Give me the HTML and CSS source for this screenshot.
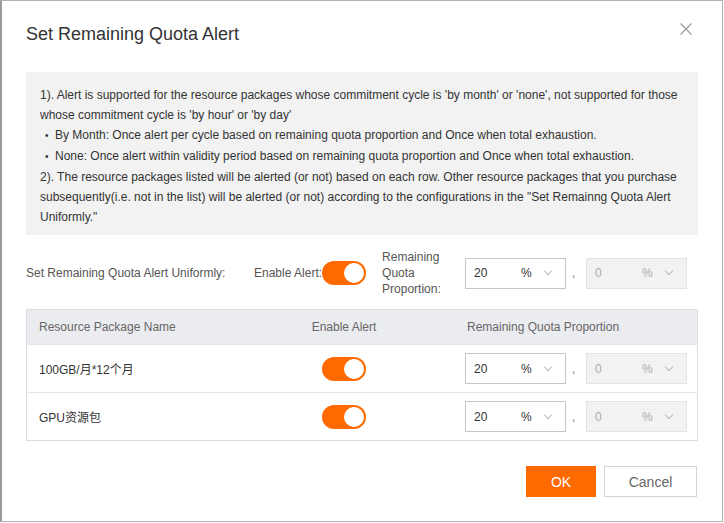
FILE: index.html
```html
<!DOCTYPE html>
<html lang="en">
<head>
    <meta charset="UTF-8">
    <meta name="viewport" content="width=device-width, initial-scale=1.0">
    <title>Set Remaining Quota Alert</title>
    <link rel="stylesheet" href="styles.css">
</head>
<body>
    <div class="dialog">
        <!-- Header -->
        <div class="dialog-header">
            <h2 class="dialog-title">Set Remaining Quota Alert</h2>
            <span class="close-btn">
                <svg width="12" height="12" viewBox="0 0 12 12"><path d="M0.5 0.5 L11.5 11.5 M11.5 0.5 L0.5 11.5" stroke="#999" stroke-width="1.1" fill="none"/></svg>
            </span>
        </div>

        <!-- Notice -->
        <div class="notice">
            <p>1). Alert is supported for the resource packages whose commitment cycle is 'by month' or 'none', not supported for those whose commitment cycle is 'by hour' or 'by day'</p>
            <ul>
                <li>By Month: Once alert per cycle based on remaining quota proportion and Once when total exhaustion.</li>
                <li>None: Once alert within validity period based on remaining quota proportion and Once when total exhaustion.</li>
            </ul>
            <p>2). The resource packages listed will be alerted (or not) based on each row. Other resource packages that you purchase subsequently(i.e. not in the list) will be alerted (or not) according to the configurations in the "Set Remainng Quota Alert Uniformly."</p>
        </div>

        <!-- Uniform settings -->
        <div class="uniform-row">
            <span class="uniform-label">Set Remaining Quota Alert Uniformly:</span>
            <span class="field-label">Enable Alert:</span>
            <span class="switch"><span class="knob"></span></span>
            <span class="prop-label">Remaining Quota Proportion:</span>
            <div class="select-pair">
                <div class="select"><span class="val">20</span><span class="unit">%</span><span class="arrow"></span></div>
                <span class="comma">,</span>
                <div class="select disabled"><span class="val">0</span><span class="unit">%</span><span class="arrow"></span></div>
            </div>
        </div>

        <!-- Table -->
        <div class="table">
            <div class="table-head">
                <div class="cell col-name">Resource Package Name</div>
                <div class="cell col-alert">Enable Alert</div>
                <div class="cell col-prop">Remaining Quota Proportion</div>
            </div>
            <div class="table-row">
                <div class="cell col-name">100GB/月*12个月</div>
                <div class="cell col-alert"><span class="switch"><span class="knob"></span></span></div>
                <div class="cell col-prop">
                    <div class="select-pair">
                        <div class="select"><span class="val">20</span><span class="unit">%</span><span class="arrow"></span></div>
                        <span class="comma">,</span>
                        <div class="select disabled"><span class="val">0</span><span class="unit">%</span><span class="arrow"></span></div>
                    </div>
                </div>
            </div>
            <div class="table-row">
                <div class="cell col-name">GPU资源包</div>
                <div class="cell col-alert"><span class="switch"><span class="knob"></span></span></div>
                <div class="cell col-prop">
                    <div class="select-pair">
                        <div class="select"><span class="val">20</span><span class="unit">%</span><span class="arrow"></span></div>
                        <span class="comma">,</span>
                        <div class="select disabled"><span class="val">0</span><span class="unit">%</span><span class="arrow"></span></div>
                    </div>
                </div>
            </div>
        </div>

        <!-- Footer -->
        <div class="dialog-footer">
            <button class="btn btn-primary">OK</button>
            <button class="btn btn-normal">Cancel</button>
        </div>
    </div>
</body>
</html>
```

FILE: styles.css
```css
html, body {
    margin: 0;
    padding: 0;
    background: #fff;
}

body {
    font-family: "Liberation Sans", Arial, "Noto Sans CJK SC", sans-serif;
    font-size: 12px;
    color: #333;
}

.dialog {
    width: 723px;
    height: 522px;
    border: 1px solid #b4b4b4;
    border-left: 2px solid #9a9a9a;
    background: #fff;
    padding: 0 24px 0 24px;
    box-sizing: border-box;
}

.dialog-header {
    display: flex;
    justify-content: space-between;
    align-items: center;
    padding-top: 22px;
    height: 22px;
}

.dialog-title {
    margin: 0;
    font-size: 18px;
    font-weight: normal;
    color: #333;
}

.close-btn {
    display: flex;
    margin-right: 6px;
    margin-top: -10px;
}

.notice {
    margin-top: 27px;
    background: #f2f2f2;
    padding: 13px 14px 8px 14px;
    line-height: 20px;
    color: #333;
}

.notice p {
    margin: 0;
}

.notice ul {
    margin: 0;
    padding-left: 5px;
    list-style: none;
}

.notice li::before {
    content: "\2022";
    display: inline-block;
    width: 10px;
    font-size: 10px;
}

.uniform-row {
    display: flex;
    align-items: center;
    margin-top: 14px;
    color: #555;
}

.uniform-label {
    width: 228px;
    white-space: nowrap;
}

.field-label {
    white-space: nowrap;
}

.prop-label {
    width: 70px;
    margin-left: 16px;
    margin-right: 13px;
    line-height: 16px;
}

.switch {
    display: inline-flex;
    justify-content: flex-end;
    align-items: center;
    flex-shrink: 0;
    width: 44px;
    height: 24px;
    border-radius: 12px;
    background: #ff6a00;
    padding: 2px;
    box-sizing: border-box;
}

.knob {
    width: 20px;
    height: 20px;
    border-radius: 50%;
    background: #fff;
}

.select-pair {
    display: flex;
    align-items: center;
}

.select {
    display: flex;
    align-items: center;
    width: 101px;
    height: 31px;
    border: 1px solid #c4c6cf;
    box-sizing: border-box;
    padding-left: 8px;
    color: #333;
    background: #fff;
}

.select.disabled {
    background: #f2f2f2;
    border-color: #e3e3e3;
    color: #aaa;
}

.select .val {
    width: 47px;
}

.select .unit {
    width: 24px;
}

.select .arrow {
    width: 5px;
    height: 5px;
    border-right: 1px solid #bbb;
    border-bottom: 1px solid #bbb;
    transform: rotate(45deg);
    margin-top: -4px;
}

.comma {
    width: 20px;
    padding-left: 6px;
    box-sizing: border-box;
    color: #888;
}

.table {
    margin-top: 12px;
    border: 1px solid #dcdee3;
}

.table-head, .table-row {
    display: grid;
    grid-template-columns: 259px 116px 1fr;
    align-items: center;
    box-sizing: border-box;
}

.table-head {
    height: 34px;
    background: #ebecf0;
    color: #666;
}

.table-row {
    height: 48px;
    border-top: 1px solid #e6e7eb;
}

.col-name {
    padding-left: 12px;
}

.col-alert {
    display: flex;
    justify-content: center;
}

.col-prop {
    padding-left: 63px;
}

.table-head .col-prop {
    padding-left: 65px;
}

.dialog-footer {
    display: flex;
    justify-content: flex-end;
    gap: 8px;
    margin-top: 25px;
    margin-right: 1px;
}

.btn {
    height: 31px;
    font-family: inherit;
    font-size: 14px;
    cursor: pointer;
    box-sizing: border-box;
}

.btn-primary {
    width: 70px;
    background: #ff6a00;
    color: #fff;
    border: none;
}

.btn-normal {
    width: 93px;
    background: #fff;
    color: #666;
    border: 1px solid #d4d4d4;
}
```
